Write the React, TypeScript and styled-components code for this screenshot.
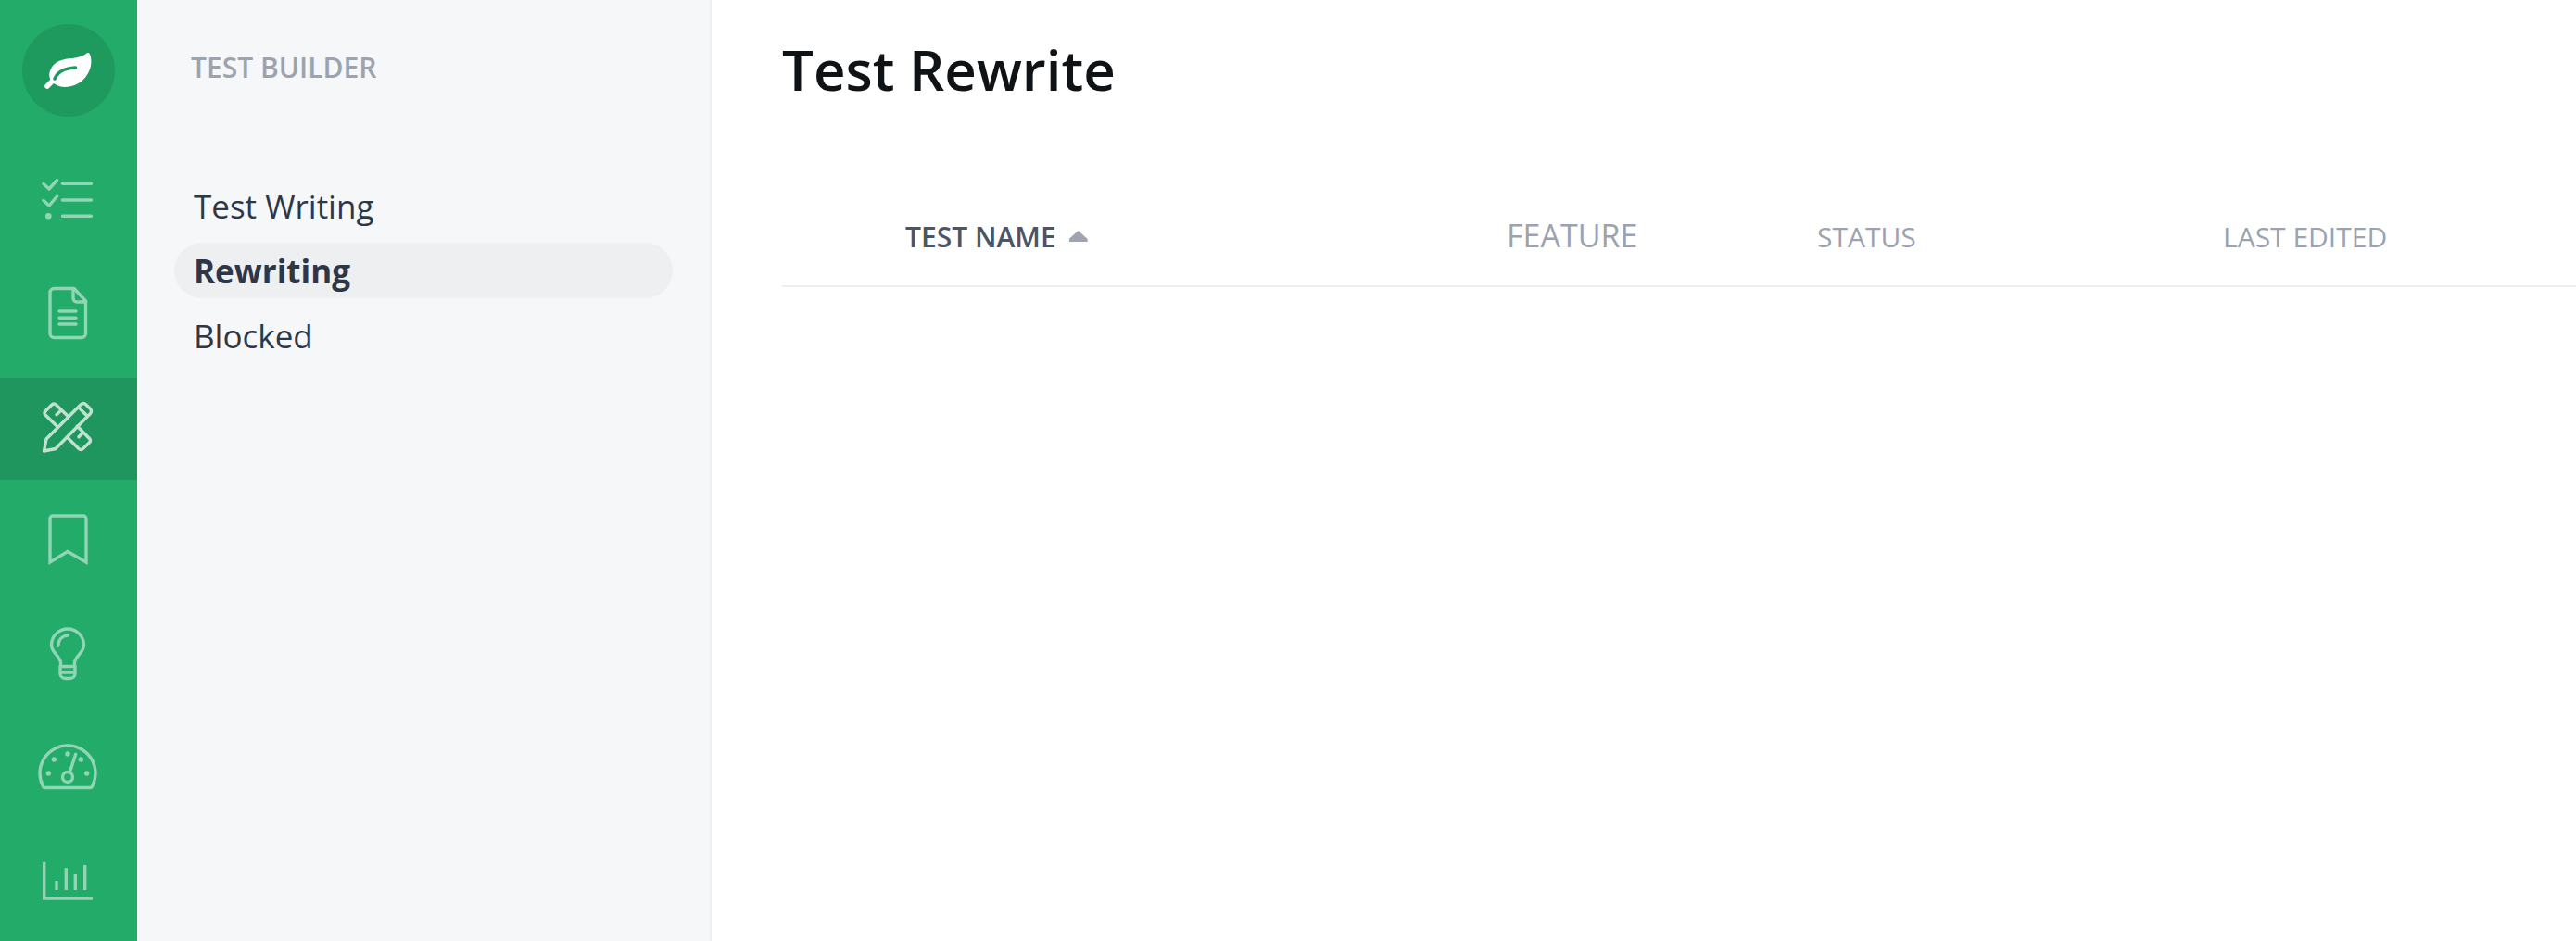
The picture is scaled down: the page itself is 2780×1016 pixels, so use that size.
import React from "react";
import styled, { createGlobalStyle } from "styled-components";

const Global = createGlobalStyle`
  html, body { margin: 0; padding: 0; background: #fff; }
  body { font-family: "Open Sans", "Liberation Sans", sans-serif; }
  * { box-sizing: border-box; }
`;

const Page = styled.div`
  display: flex;
  height: 1016px;
  overflow: hidden;
`;

const Rail = styled.nav`
  width: 148px;
  flex: none;
  background: #22ab69;
  display: flex;
  flex-direction: column;
  padding-top: 26px;
`;

const Logo = styled.div`
  width: 100px;
  height: 100px;
  margin: 0 auto 36px;
  border-radius: 50%;
  background: #1f9a5f;
  display: flex;
`;

const RailList = styled.div`
  display: flex;
  flex-direction: column;
  gap: 13px;
`;

const RailItem = styled.div<{ $active?: boolean }>`
  height: 110px;
  display: flex;
  align-items: center;
  justify-content: center;
  background: ${(p) => (p.$active ? "#1f965e" : "transparent")};
  color: #fff;
  svg {
    opacity: ${(p) => (p.$active ? 0.72 : 0.5)};
  }
`;

const Sidebar = styled.aside`
  width: 620px;
  flex: none;
  background: #f5f7f9;
  border-right: 2px solid #eef0f2;
  padding: 54px 40px 0;
`;

const SideTitle = styled.div`
  font-size: 30px;
  line-height: 38px;
  font-weight: 600;
  color: #9ca3af;
  padding-left: 18px;
  margin-bottom: 100px;
`;

const SideList = styled.div`
  display: flex;
  flex-direction: column;
  gap: 10px;
`;

const SideItem = styled.div<{ $active?: boolean }>`
  height: 60px;
  display: flex;
  align-items: center;
  padding-left: 21px;
  border-radius: 30px;
  font-size: 35px;
  font-weight: ${(p) => (p.$active ? 700 : 400)};
  color: #2d3748;
  background: ${(p) => (p.$active ? "#eeeff1" : "transparent")};
`;

const Main = styled.main`
  flex: 1;
  min-width: 0;
  padding-left: 76px;
`;

const Title = styled.h1`
  margin: 0;
  height: 152px;
  padding-top: 34px;
  font-size: 60px;
  line-height: 82px;
  font-weight: 600;
  color: #0f1316;
`;

const HeaderRow = styled.div`
  display: grid;
  grid-template-columns: 649px 335px 438px 1fr;
  align-items: baseline;
  height: 158px;
  padding: 83px 0 0 133px;
  border-bottom: 2px solid #eeeeee;
`;

const Sorted = styled.div`
  display: flex;
  align-items: center;
  gap: 14px;
  font-size: 30px;
  line-height: 38px;
  font-weight: 600;
  color: #4a5568;
`;

const SortArrow = styled.span`
  width: 20px;
  height: 12px;
  margin-top: -2px;
  background: #a0a3b0;
  clip-path: polygon(50% 0, 100% 75%, 100% 100%, 0 100%, 0 75%);
`;

const Column = styled.div<{ $large?: boolean }>`
  font-size: ${(p) => (p.$large ? 34 : 30)}px;
  line-height: 38px;
  font-weight: 400;
  color: #9ca3af;
`;

const Icon = ({ center, children }: { center: number; children: React.ReactNode }) => (
  <svg
    width="80"
    height="80"
    viewBox={`34 ${center - 40} 80 80`}
    fill="none"
    stroke="currentColor"
    strokeWidth="3.4"
    strokeLinecap="round"
    strokeLinejoin="round"
  >
    {children}
  </svg>
);

const LeafLogo = () => (
  <svg width="100" height="100" viewBox="24 26 100 100" fill="none">
    <path
      fill="#fff"
      d="M94 57.3C97 56 98.5 61 98.4 67C98 80 87 94 70 94C64 94 58 91 55 87C52 82 53 76 57 71C62 65 70 63.5 78 63C85 62.5 90 60.5 94 57.3Z"
    />
    <path d="M51 93L57 87" stroke="#fff" strokeWidth="5.5" strokeLinecap="round" />
    <path d="M59 85C62 78 70 73.5 81.5 73" stroke="#1f9a5f" strokeWidth="3.6" strokeLinecap="round" />
  </svg>
);

const icons = [
  <Icon center={217} key="tasks">
    <path d="M47 198.5L53 204L61.5 194.5M47 216.5L53 222L61.5 212M67.5 198.3H98.5M67.5 216H98.5M67.5 233.3H98.5" />
    <circle cx="52.3" cy="233.3" r="3.3" fill="currentColor" stroke="none" />
  </Icon>,
  <Icon center={340} key="doc">
    <path d="M58.5 311.5H80L92.5 325V360a4.5 4.5 0 0 1-4.5 4.5H58.5a4.5 4.5 0 0 1-4.5-4.5V316a4.5 4.5 0 0 1 4.5-4.5Z" />
    <path d="M79 312V322a4 4 0 0 0 4 4H92.5M64 336H82M64 343.3H82M64 350H82" />
  </Icon>,
  <Icon center={463} key="tools">
    <path d="M47.5 487L50 474L84 440L87.5 436.5Q90 434.5 92.5 436.5L97.5 441.5Q99.5 444 97.5 446.5L60 484.5ZM84.5 439.5L94.5 449.5" />
    <path d="M62.3 461L49 448Q47 446 49 444L56 437Q58.3 435 60.5 437L74 450M72.7 472.3L85 484.5Q87.3 486.5 89.5 484.5L96.5 477.7Q98.5 475.7 96.5 473.5L83.3 460M61 447.7L65.7 443.3M85 471.7L89.3 467.3" />
  </Icon>,
  <Icon center={586} key="bookmark">
    <path d="M54 607V560a3 3 0 0 1 3-3H90a3 3 0 0 1 3 3V607L73 595.5Z" strokeLinecap="butt" strokeLinejoin="miter" />
  </Icon>,
  <Icon center={709} key="bulb">
    <path d="M65.5 719V715C64 708 55.5 704 55.5 696.5A17.5 17.5 0 0 1 90.5 696.5C90.5 704 82 708 80.5 715V719" />
    <path d="M65 719.5H81M65 726H81M65 719.5V727a5.5 5.5 0 0 0 5.5 5.5h5a5.5 5.5 0 0 0 5.5-5.5V719.5M62.7 697.3C63 691 67 686.5 73.3 686" />
  </Icon>,
  <Icon center={832} key="gauge">
    <path d="M48.5 850.5H97.5Q99 850.5 100 848A30 30 0 1 0 46 848Q47 850.5 48.5 850.5Z" />
    <circle cx="73" cy="839" r="5.5" />
    <path d="M76 831.7L81.7 814.3" />
    <g fill="currentColor" stroke="none">
      <circle cx="52.3" cy="835" r="2.7" />
      <circle cx="58.3" cy="820" r="2.7" />
      <circle cx="73" cy="814" r="2.7" />
      <circle cx="87.3" cy="820" r="2.7" />
      <circle cx="93.7" cy="835" r="2.7" />
    </g>
  </Icon>,
  <Icon center={955} key="chart">
    <path
      strokeLinecap="butt"
      strokeLinejoin="miter"
      d="M47.7 930.7V970H100M61 951V961M71.3 937.3V961M81.3 944V961M91.7 934V961"
    />
  </Icon>,
];

export default function App() {
  return (
    <Page>
      <Global />
      <Rail>
        <Logo>
          <LeafLogo />
        </Logo>
        <RailList>
          {icons.map((icon, i) => (
            <RailItem key={i} $active={i === 2}>
              {icon}
            </RailItem>
          ))}
        </RailList>
      </Rail>
      <Sidebar>
        <SideTitle>TEST BUILDER</SideTitle>
        <SideList>
          <SideItem>Test Writing</SideItem>
          <SideItem $active>Rewriting</SideItem>
          <SideItem>Blocked</SideItem>
        </SideList>
      </Sidebar>
      <Main>
        <Title>Test Rewrite</Title>
        <HeaderRow>
          <Sorted>
            TEST NAME
            <SortArrow />
          </Sorted>
          <Column $large>FEATURE</Column>
          <Column>STATUS</Column>
          <Column>LAST EDITED</Column>
        </HeaderRow>
      </Main>
    </Page>
  );
}
